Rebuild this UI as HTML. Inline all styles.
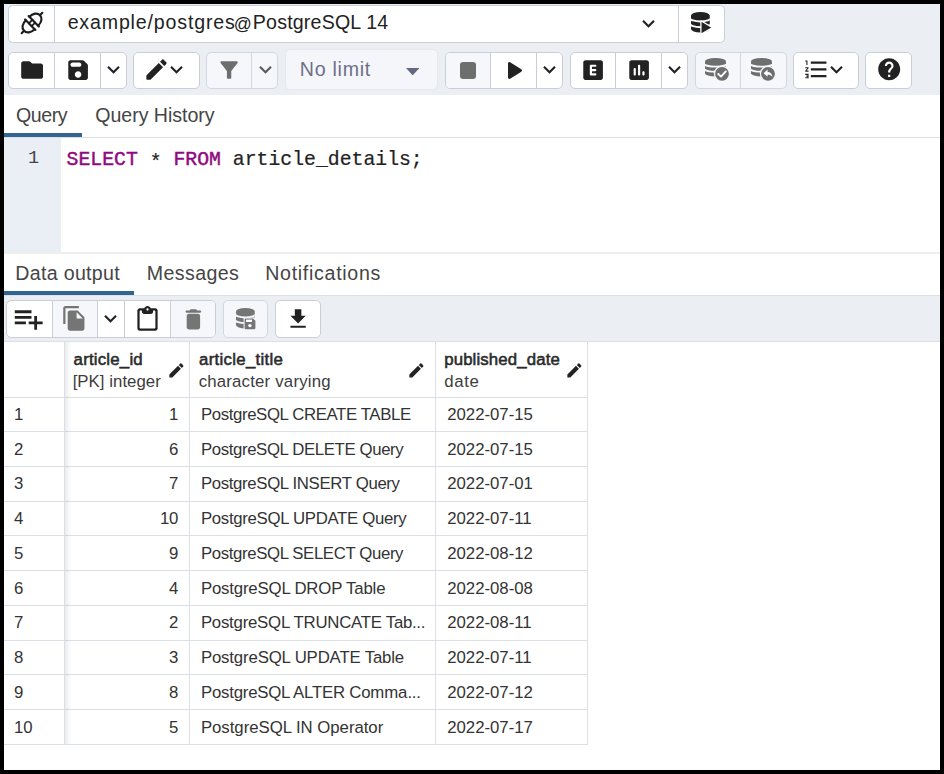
<!DOCTYPE html>
<html><head><meta charset="utf-8"><title>pgAdmin Query Tool</title>
<style>
html,body{margin:0;padding:0;background:#000;}
body{width:944px;height:774px;position:relative;overflow:hidden;font-family:"Liberation Sans",sans-serif;}
.a{position:absolute;}
.b{position:absolute;box-sizing:border-box;}
.t{position:absolute;white-space:pre;}
b{font-weight:700;}
.kw{color:#8f0a80;-webkit-text-stroke:0.45px #8f0a80;}
</style></head><body>
<div class="a" style="left:4px;top:4px;width:936px;height:766px;background:#fff"></div>
<div class="a" style="left:4px;top:4px;width:936px;height:90.5px;background:#ebeef3"></div>
<div class="b" style="left:8px;top:4.5px;width:716.5px;height:38.0px;background:#fff;border:1px solid #c9ced9;border-radius:4.5px;"></div>
<div class="a" style="left:54.0px;top:4.5px;width:1px;height:38.0px;background:#c9ced9;"></div>
<div class="a" style="left:677.5px;top:4.5px;width:1px;height:38.0px;background:#c9ced9;"></div>
<svg class="a" style="left:15.600000000000001px;top:7.300000000000001px" width="32" height="32" viewBox="-4 -4 32 32"><g transform="translate(12 12) rotate(-44.5)" fill="none" stroke="#1c1c1c" stroke-width="2.15" stroke-linecap="round">
<path d="M-14.5 0H-11.2"/><path d="M14.5 0H11.2"/>
<path d="M-2.45 -6.3 C-7.4 -6.3 -11.2 -3.8 -11.2 0 C-11.2 3.8 -7.4 6.3 -2.45 6.3"/><path d="M2.45 -6.3 C7.4 -6.3 11.2 -3.8 11.2 0 C11.2 3.8 7.4 6.3 2.45 6.3"/>
<path d="M-2.45 -7.3V7.3"/><path d="M2.45 -7.3V7.3"/>
<path d="M-2.45 -2H2.45" stroke-width="1.8"/><path d="M-2.45 2H2.45" stroke-width="1.8"/>
</g></svg>
<div class="t" style="left:67.63px;top:10.11px;font-size:19.6px;line-height:25px;letter-spacing:0.835px;font-weight:400;color:#222222;font-family:'Liberation Sans',sans-serif;">example/postgres</div>
<div class="t" style="left:233.81px;top:12.93px;font-size:17.8px;line-height:23px;letter-spacing:0px;font-weight:400;color:#222222;font-family:'Liberation Sans',sans-serif;">@</div>
<div class="t" style="left:252.84px;top:10.11px;font-size:19.6px;line-height:25px;letter-spacing:0.183px;font-weight:400;color:#222222;font-family:'Liberation Sans',sans-serif;">PostgreSQL 14</div>
<svg class="a" style="left:636.10px;top:11.09px" width="25" height="25" viewBox="0 0 24 24" fill="#222222"><path d="M7.41 8.59L12 13.17l4.59-4.58L18 10l-6 6-6-6 1.41-1.41z"/></svg>
<svg class="a" style="left:691px;top:12.25px;overflow:visible" width="22" height="23" viewBox="0 0 22 23"><clipPath id="dbc1"><path d="M0 3.49 A9.375 3.49 0 0 1 18.75 3.49 V17.02 A9.375 3.49 0 0 1 0 17.02 Z"/></clipPath><path d="M0 3.49 A9.375 3.49 0 0 1 18.75 3.49 V17.02 A9.375 3.49 0 0 1 0 17.02 Z" fill="#222222"/><path clip-path="url(#dbc1)" d="M-1 5.98 A10.375 3.49 0 0 0 19.75 5.98" fill="none" stroke="#fff" stroke-width="1.95"/><path clip-path="url(#dbc1)" d="M-1 11.72 A10.375 3.49 0 0 0 19.75 11.72" fill="none" stroke="#fff" stroke-width="1.95"/><path d="M9.9 8.8 L21.6 15.6 L9.9 22.4 Z" fill="#222" stroke="#fff" stroke-width="1.3" stroke-linejoin="round"/></svg>
<div class="b" style="left:8.1px;top:51.5px;width:118.9px;height:37.900000000000006px;background:#fff;border:1px solid #c9ced9;border-radius:5px;"></div>
<div class="a" style="left:54.0px;top:51.5px;width:1px;height:37.900000000000006px;background:#c9ced9;"></div>
<div class="a" style="left:100.0px;top:51.5px;width:1px;height:37.900000000000006px;background:#c9ced9;"></div>
<svg class="a" style="left:18.50px;top:56.80px" width="26.2" height="26.2" viewBox="0 0 24 24" fill="#222222"><path d="M10.59 4.59C10.21 4.21 9.7 4 9.17 4H4c-1.1 0-1.99.9-1.99 2L2 18c0 1.1.9 2 2 2h16c1.1 0 2-.9 2-2V8c0-1.1-.9-2-2-2h-8l-1.410-1.410z"/></svg>
<svg class="a" style="left:64.50px;top:56.80px" width="26.2" height="26.2" viewBox="0 0 24 24" fill="#222222"><path d="M17.59 3.59c-.38-.38-.89-.59-1.42-.59H5c-1.11 0-2 .9-2 2v14c0 1.1.9 2 2 2h14c1.1 0 2-.9 2-2V7.83c0-.53-.21-1.04-.59-1.41l-2.820-2.830zM12 19c-1.660 0-3-1.340-3-3s1.340-3 3-3 3 1.340 3 3-1.340 3-3 3zm1-10H7c-1.100 0-2-.9-2-2s.9-2 2-2h6c1.100 0 2 .9 2 2s-.9 2-2 2z"/></svg>
<svg class="a" style="left:101.10px;top:57.09px" width="25" height="25" viewBox="0 0 24 24" fill="#222222"><path d="M7.41 8.59L12 13.17l4.59-4.58L18 10l-6 6-6-6 1.41-1.41z"/></svg>
<div class="b" style="left:133px;top:51.5px;width:66.5px;height:37.900000000000006px;background:#fff;border:1px solid #c9ced9;border-radius:5px;"></div>
<svg class="a" style="left:143.20px;top:56.40px" width="27" height="27" viewBox="0 0 24 24" fill="#222222"><path d="M3 17.46v3.04c0 .28.22.5.5.5h3.04c.13 0 .26-.05.35-.15L17.81 9.94l-3.75-3.75L3.15 17.1c-.1.1-.15.22-.15.36zM20.71 7.04c.39-.39.39-1.02 0-1.41l-2.34-2.34c-.39-.39-1.02-.39-1.41 0l-1.83 1.83 3.75 3.75 1.83-1.83z"/></svg>
<svg class="a" style="left:163.70px;top:57.39px" width="25" height="25" viewBox="0 0 24 24" fill="#222222"><path d="M7.41 8.59L12 13.17l4.59-4.58L18 10l-6 6-6-6 1.41-1.41z"/></svg>
<div class="b" style="left:206px;top:51.5px;width:72px;height:37.900000000000006px;background:#f6f7fa;border:1px solid #d3d7e0;border-radius:5px;"></div>
<div class="a" style="left:251.4px;top:51.5px;width:1px;height:37.900000000000006px;background:#d3d7e0;"></div>
<svg class="a" style="left:215.60px;top:56.80px" width="26.2" height="26.2" viewBox="0 0 24 24" fill="#6e6e6e"><path d="M4.25 5.61C6.27 8.2 10 13 10 13v6c0 .55.45 1 1 1h2c.55 0 1-.45 1-1v-6s3.72-4.8 5.74-7.39c.51-.66.04-1.61-.79-1.61H5.04c-.83 0-1.3.95-.79 1.61z"/></svg>
<svg class="a" style="left:252.60px;top:57.09px" width="25" height="25" viewBox="0 0 24 24" fill="#5a5a5a"><path d="M7.41 8.59L12 13.17l4.59-4.58L18 10l-6 6-6-6 1.41-1.41z"/></svg>
<div class="b" style="left:285px;top:49.3px;width:152.60000000000002px;height:41.2px;background:#f5f6fa;border:1px solid #e6e8ee;border-radius:5px;"></div>
<div class="t" style="left:299.74px;top:56.51px;font-size:19.6px;line-height:25px;letter-spacing:0.743px;font-weight:400;color:#6b7089;font-family:'Liberation Sans',sans-serif;">No limit</div>
<svg class="a" style="left:405.7px;top:67.6px" width="13.4" height="7.4" viewBox="0 0 10 5.5"><path d="M0 0H10L5 5.5Z" fill="#646980"/></svg>
<div class="b" style="left:444.5px;top:51.5px;width:118.0px;height:37.900000000000006px;background:#fff;border:1px solid #c9ced9;border-radius:5px;"></div>
<div class="a" style="left:490.0px;top:51.5px;width:1px;height:37.900000000000006px;background:#c9ced9;"></div>
<div class="a" style="left:536.0px;top:51.5px;width:1px;height:37.900000000000006px;background:#c9ced9;"></div>
<div class="a" style="left:445.5px;top:52.5px;width:44.5px;height:35.900000000000006px;background:#f6f7fa;border-radius:4px 0px 0px 4px;"></div>
<div class="a" style="left:459.5px;top:62.2px;width:16.7px;height:16.6px;border-radius:3px;background:#6e6e6e"></div>
<svg class="a" style="left:496.90px;top:54.00px" width="33" height="33" viewBox="0 0 24 24" fill="#222222"><path d="M8 6.82v10.36c0 .79.87 1.27 1.54.84l8.14-5.18c.62-.39.62-1.29 0-1.69L9.54 5.98C8.87 5.55 8 6.03 8 6.82z"/></svg>
<svg class="a" style="left:537.25px;top:57.09px" width="25" height="25" viewBox="0 0 24 24" fill="#222222"><path d="M7.41 8.59L12 13.17l4.59-4.58L18 10l-6 6-6-6 1.41-1.41z"/></svg>
<div class="b" style="left:569.5px;top:51.5px;width:118.5px;height:37.900000000000006px;background:#fff;border:1px solid #c9ced9;border-radius:5px;"></div>
<div class="a" style="left:615.0px;top:51.5px;width:1px;height:37.900000000000006px;background:#c9ced9;"></div>
<div class="a" style="left:660.8px;top:51.5px;width:1px;height:37.900000000000006px;background:#c9ced9;"></div>
<svg class="a" style="left:579.65px;top:56.80px" width="26.2" height="26.2" viewBox="0 0 24 24" fill="#222222"><path d="M19 3H5c-1.1 0-2 .9-2 2v14c0 1.1.9 2 2 2h14c1.1 0 2-.9 2-2V5c0-1.1-.9-2-2-2zm-5 6h-3v2h3c.55 0 1 .45 1 1s-.45 1-1 1h-3v2h3c.55 0 1 .45 1 1s-.45 1-1 1h-4c-.55 0-1-.45-1-1V8c0-.55.45-1 1-1h4c.55 0 1 .45 1 1s-.45 1-1 1z"/></svg>
<svg class="a" style="left:625.50px;top:56.80px" width="26.2" height="26.2" viewBox="0 0 24 24" fill="#222222"><path d="M19 3H5c-1.1 0-2 .9-2 2v14c0 1.1.9 2 2 2h14c1.1 0 2-.9 2-2V5c0-1.1-.9-2-2-2zM8 17c-.55 0-1-.45-1-1v-5c0-.55.45-1 1-1s1 .45 1 1v5c0 .55-.45 1-1 1zm4 0c-.55 0-1-.45-1-1V8c0-.55.45-1 1-1s1 .45 1 1v8c0 .55-.45 1-1 1zm4 0c-.55 0-1-.45-1-1v-2c0-.55.45-1 1-1s1 .45 1 1v2c0 .55-.45 1-1 1z"/></svg>
<svg class="a" style="left:662.40px;top:57.09px" width="25" height="25" viewBox="0 0 24 24" fill="#222222"><path d="M7.41 8.59L12 13.17l4.59-4.58L18 10l-6 6-6-6 1.41-1.41z"/></svg>
<div class="b" style="left:694.5px;top:51.5px;width:92.5px;height:37.900000000000006px;background:#f6f7fa;border:1px solid #d3d7e0;border-radius:5px;"></div>
<div class="a" style="left:740.2px;top:51.5px;width:1px;height:37.900000000000006px;background:#d3d7e0;"></div>
<svg class="a" style="left:705.25px;top:58.25px;overflow:visible" width="26" height="26" viewBox="0 0 26 26"><clipPath id="dbc2"><path d="M0 3.15 A10.5 3.15 0 0 1 21 3.15 V15.36 A10.5 3.15 0 0 1 0 15.36 Z"/></clipPath><path d="M0 3.15 A10.5 3.15 0 0 1 21 3.15 V15.36 A10.5 3.15 0 0 1 0 15.36 Z" fill="#6e6e6e"/><path clip-path="url(#dbc2)" d="M-1 5.39 A11.5 3.15 0 0 0 22 5.39" fill="none" stroke="#f6f7fa" stroke-width="1.76"/><path clip-path="url(#dbc2)" d="M-1 10.57 A11.5 3.15 0 0 0 22 10.57" fill="none" stroke="#f6f7fa" stroke-width="1.76"/><circle cx="17" cy="15.85" r="8.2" fill="#f6f7fa"/><circle cx="17" cy="15.85" r="6.9" fill="#6e6e6e"/><path d="M13.3 16 L16 18.6 L20.8 13.4" fill="none" stroke="#fff" stroke-width="1.9" stroke-linecap="round" stroke-linejoin="round"/></svg>
<svg class="a" style="left:751.1px;top:58.25px;overflow:visible" width="26" height="26" viewBox="0 0 26 26"><clipPath id="dbc3"><path d="M0 3.15 A10.5 3.15 0 0 1 21 3.15 V15.36 A10.5 3.15 0 0 1 0 15.36 Z"/></clipPath><path d="M0 3.15 A10.5 3.15 0 0 1 21 3.15 V15.36 A10.5 3.15 0 0 1 0 15.36 Z" fill="#6e6e6e"/><path clip-path="url(#dbc3)" d="M-1 5.39 A11.5 3.15 0 0 0 22 5.39" fill="none" stroke="#f6f7fa" stroke-width="1.76"/><path clip-path="url(#dbc3)" d="M-1 10.57 A11.5 3.15 0 0 0 22 10.57" fill="none" stroke="#f6f7fa" stroke-width="1.76"/><circle cx="17" cy="15.85" r="8.2" fill="#f6f7fa"/><circle cx="17" cy="15.85" r="6.9" fill="#6e6e6e"/><path d="M12.6 15.2 L16.6 11.6 V13.9 C19.6 13.9 21.2 15.9 21.4 19.2 C20.4 17.6 19 16.6 16.6 16.6 V18.8 Z" fill="#fff"/></svg>
<div class="b" style="left:793px;top:51.5px;width:65.70000000000005px;height:37.900000000000006px;background:#fff;border:1px solid #c9ced9;border-radius:5px;"></div>
<svg class="a" style="left:802.80px;top:56.10px" width="26.8" height="26.8" viewBox="0 0 24 24" fill="#222222"><path d="M2 17h2v.5H3v1h1v.5H2v1h3v-4H2v1zm1-9h1V4H2v1h1v3zm-1 3h1.8L2 13.1v.9h3v-1H3.2L5 10.9V10H2v1zm5-6v2h14V5H7zm0 14h14v-2H7v2zm0-6h14v-2H7v2z"/></svg>
<svg class="a" style="left:823.50px;top:57.09px" width="25" height="25" viewBox="0 0 24 24" fill="#222222"><path d="M7.41 8.59L12 13.17l4.59-4.58L18 10l-6 6-6-6 1.41-1.41z"/></svg>
<div class="b" style="left:865.2px;top:51.5px;width:46.799999999999955px;height:37.900000000000006px;background:#fff;border:1px solid #c9ced9;border-radius:5px;"></div>
<svg class="a" style="left:875.80px;top:56.45px" width="26.4" height="26.4" viewBox="0 0 24 24" fill="#222222"><path d="M12 2C6.48 2 2 6.48 2 12s4.480 10 10 10 10-4.480 10-10S17.520 2 12 2zm1 17h-2v-2h2v2zm2.070-7.750l-.9.920C13.450 12.900 13 13.500 13 15h-2v-.5c0-1.100.450-2.100 1.170-2.830l1.240-1.260c.37-.36.59-.86.59-1.410 0-1.100-.9-2-2-2s-2 .9-2 2H8c0-2.210 1.790-4 4-4s4 1.790 4 4c0 .880-.360 1.680-.930 2.250z"/></svg>
<div class="t" style="left:15.93px;top:102.51px;font-size:19.6px;line-height:25px;letter-spacing:-0.403px;font-weight:400;color:#454545;font-family:'Liberation Sans',sans-serif;">Query</div>
<div class="t" style="left:95.18px;top:102.51px;font-size:19.6px;line-height:25px;letter-spacing:-0.024px;font-weight:400;color:#454545;font-family:'Liberation Sans',sans-serif;">Query History</div>
<div class="a" style="left:4px;top:137px;width:936px;height:1px;background:#dcdfe5"></div>
<div class="a" style="left:4px;top:133px;width:78px;height:4.2px;background:#326690"></div>
<div class="a" style="left:4px;top:138px;width:56.7px;height:114px;background:#eaeef5"></div>
<div class="t" style="left:27.9px;top:147.44px;font-size:18.6px;line-height:24px;letter-spacing:0px;font-weight:400;color:#444;font-family:'Liberation Mono',monospace;">1</div>
<div class="t" style="left:66.6px;top:146.62px;font-size:19.8px;line-height:26px;letter-spacing:0px;font-weight:400;color:#222;font-family:'Liberation Mono',monospace;white-space:pre;-webkit-text-stroke:0.2px #222;"><span class="kw">SELECT</span> <span style="position:relative;top:3.4px">*</span> <span class="kw">FROM</span> article_details;</div>
<div class="a" style="left:4px;top:252.2px;width:936px;height:2.2px;background:#eeeeee"></div>
<div class="t" style="left:15.24px;top:260.71px;font-size:19.6px;line-height:25px;letter-spacing:0.319px;font-weight:400;color:#454545;font-family:'Liberation Sans',sans-serif;">Data output</div>
<div class="t" style="left:146.74px;top:260.71px;font-size:19.6px;line-height:25px;letter-spacing:0.397px;font-weight:400;color:#454545;font-family:'Liberation Sans',sans-serif;">Messages</div>
<div class="t" style="left:265.24px;top:260.71px;font-size:19.6px;line-height:25px;letter-spacing:0.696px;font-weight:400;color:#454545;font-family:'Liberation Sans',sans-serif;">Notifications</div>
<div class="a" style="left:4px;top:295.2px;width:936px;height:46.8px;background:#ebeef3;box-shadow:inset 0 -1px 0 #dcdfe5, inset 0 1px 0 #dcdfe5"></div>
<div class="a" style="left:4px;top:291.3px;width:130.2px;height:4.2px;background:#326690"></div>
<div class="b" style="left:6px;top:300.3px;width:209.5px;height:37.5px;background:#fff;border:1px solid #c9ced9;border-radius:5px;"></div>
<div class="a" style="left:51.5px;top:300.3px;width:1px;height:37.5px;background:#c9ced9;"></div>
<div class="a" style="left:96.8px;top:300.3px;width:1px;height:37.5px;background:#c9ced9;"></div>
<div class="a" style="left:123.5px;top:300.3px;width:1px;height:37.5px;background:#c9ced9;"></div>
<div class="a" style="left:169.5px;top:300.3px;width:1px;height:37.5px;background:#c9ced9;"></div>
<div class="a" style="left:52.5px;top:301.3px;width:44.3px;height:35.5px;background:#f6f7fa;border-radius:0px 0px 0px 0px;"></div>
<div class="a" style="left:170.5px;top:301.3px;width:44.0px;height:35.5px;background:#f6f7fa;border-radius:0px 4px 4px 0px;"></div>
<svg class="a" style="left:12.20px;top:302.30px" width="33.4" height="33.4" viewBox="0 0 24 24" fill="#222222"><path d="M14 10H2v2h12v-2zm0-4H2v2h12V6zm4 8v-4h-2v4h-4v2h4v4h2v-4h4v-2h-4zM2 16h8v-2H2v2z"/></svg>
<svg class="a" style="left:60.90px;top:305.35px" width="26.8" height="26.8" viewBox="0 0 24 24" fill="#757575"><path d="M16 1H4c-1.100 0-2 .9-2 2v14h2V3h12V1zm-1 4l6 6v10c0 1.100-.9 2-2 2H7.990C6.890 23 6 22.100 6 21l.010-14c0-1.100.890-2 1.990-2h7zm-1 7h5.500L14 6.500V12z"/></svg>
<svg class="a" style="left:98.35px;top:306.29px" width="25" height="25" viewBox="0 0 24 24" fill="#222222"><path d="M7.41 8.59L12 13.17l4.59-4.58L18 10l-6 6-6-6 1.41-1.41z"/></svg>
<svg class="a" style="left:133.50px;top:305.50px" width="27" height="27" viewBox="0 0 24 24" fill="#222222"><path d="M19 2h-4.180C14.400.840 13.300 0 12 0S9.600.840 9.180 2H5c-1.100 0-2 .9-2 2v16c0 1.100.9 2 2 2h14c1.100 0 2-.9 2-2V4c0-1.100-.9-2-2-2zm-7 0c.55 0 1 .45 1 1s-.45 1-1 1-1-.45-1-1 .45-1 1-1zm6 18H6c-.55 0-1-.45-1-1V5c0-.55.45-1 1-1h1v1c0 1.100.9 2 2 2h6c1.100 0 2-.9 2-2V4h1c.55 0 1 .45 1 1v14c0 .55-.45 1-1 1z"/></svg>
<svg class="a" style="left:179.60px;top:305.90px" width="26.8" height="26.8" viewBox="0 0 24 24" fill="#757575"><path d="M6 19c0 1.100.9 2 2 2h8c1.100 0 2-.9 2-2V9c0-1.100-.9-2-2-2H8c-1.100 0-2 .9-2 2v10zM18 4h-2.500l-.710-.710c-.180-.180-.440-.290-.700-.290H9.910c-.260 0-.520.110-.700.290L8.500 4H6c-.55 0-1 .45-1 1s.45 1 1 1h12c.55 0 1-.45 1-1s-.45-1-1-1z"/></svg>
<div class="b" style="left:222.7px;top:300.3px;width:45.60000000000002px;height:37.5px;background:#f6f7fa;border:1px solid #d3d7e0;border-radius:5px;"></div>
<svg class="a" style="left:235.75px;top:308px;overflow:visible" width="22" height="23" viewBox="0 0 22 23"><clipPath id="dbc4"><path d="M0 3.47 A9.375 3.47 0 0 1 18.75 3.47 V16.93 A9.375 3.47 0 0 1 0 16.93 Z"/></clipPath><path d="M0 3.47 A9.375 3.47 0 0 1 18.75 3.47 V16.93 A9.375 3.47 0 0 1 0 16.93 Z" fill="#757575"/><path clip-path="url(#dbc4)" d="M-1 5.95 A10.375 3.47 0 0 0 19.75 5.95" fill="none" stroke="#f6f7fa" stroke-width="1.94"/><path clip-path="url(#dbc4)" d="M-1 11.66 A10.375 3.47 0 0 0 19.75 11.66" fill="none" stroke="#f6f7fa" stroke-width="1.94"/><rect x="7.6" y="9.5" width="12.6" height="12.6" fill="#f6f7fa"/><path d="M8.6 11.6 a1.2 1.2 0 0 1 1.2-1.2 h7.2 l2.4 2.4 v7.3 a1.2 1.2 0 0 1 -1.2 1.2 h-8.400 a1.2 1.2 0 0 1 -1.2-1.2 z" fill="#757575"/><rect x="10" y="11.600" width="6" height="2.4" fill="#fff"/><circle cx="13.9" cy="17.6" r="1.7" fill="#fff"/></svg>
<div class="b" style="left:275.3px;top:300.3px;width:46.19999999999999px;height:37.5px;background:#fff;border:1px solid #c9ced9;border-radius:5px;"></div>
<svg class="a" style="left:285.30px;top:305.60px" width="26.2" height="26.2" viewBox="0 0 24 24" fill="#222222"><path d="M19 9h-4V3H9v6H5l7 7 7-7zM5 18v2h14v-2H5z"/></svg>
<div class="a" style="left:64.0px;top:342px;width:1px;height:402.25px;background:#dcdfe5"></div>
<div class="a" style="left:189.0px;top:342px;width:1px;height:402.25px;background:#dcdfe5"></div>
<div class="a" style="left:434.8px;top:342px;width:1px;height:402.25px;background:#dcdfe5"></div>
<div class="a" style="left:587.0px;top:342px;width:1px;height:402.25px;background:#dcdfe5"></div>
<div class="a" style="left:4px;top:396.50px;width:583.5px;height:1px;background:#dcdfe5"></div>
<div class="a" style="left:4px;top:431.23px;width:583.5px;height:1px;background:#dcdfe5"></div>
<div class="a" style="left:4px;top:465.95px;width:583.5px;height:1px;background:#dcdfe5"></div>
<div class="a" style="left:4px;top:500.68px;width:583.5px;height:1px;background:#dcdfe5"></div>
<div class="a" style="left:4px;top:535.40px;width:583.5px;height:1px;background:#dcdfe5"></div>
<div class="a" style="left:4px;top:570.12px;width:583.5px;height:1px;background:#dcdfe5"></div>
<div class="a" style="left:4px;top:604.85px;width:583.5px;height:1px;background:#dcdfe5"></div>
<div class="a" style="left:4px;top:639.58px;width:583.5px;height:1px;background:#dcdfe5"></div>
<div class="a" style="left:4px;top:674.30px;width:583.5px;height:1px;background:#dcdfe5"></div>
<div class="a" style="left:4px;top:709.03px;width:583.5px;height:1px;background:#dcdfe5"></div>
<div class="a" style="left:4px;top:743.75px;width:583.5px;height:1px;background:#dcdfe5"></div>
<div class="a" style="left:65px;top:342px;width:6px;height:402.25px;background:linear-gradient(to right, rgba(60,70,90,0.10), rgba(60,70,90,0))"></div>
<div class="t" style="left:73.59px;top:348.68px;font-size:16.8px;line-height:22px;letter-spacing:0.216px;font-weight:400;color:#2a2a2a;font-family:'Liberation Sans',sans-serif;-webkit-text-stroke:0.55px #2a2a2a;">article_id</div>
<div class="t" style="left:72.66px;top:371.28px;font-size:16.8px;line-height:22px;letter-spacing:0.044px;font-weight:400;color:#3c3c3c;font-family:'Liberation Sans',sans-serif;">[PK] integer</div>
<div class="t" style="left:199.09px;top:348.68px;font-size:16.8px;line-height:22px;letter-spacing:0.295px;font-weight:400;color:#2a2a2a;font-family:'Liberation Sans',sans-serif;-webkit-text-stroke:0.55px #2a2a2a;">article_title</div>
<div class="t" style="left:198.64px;top:371.28px;font-size:16.8px;line-height:22px;letter-spacing:0.202px;font-weight:400;color:#3c3c3c;font-family:'Liberation Sans',sans-serif;">character varying</div>
<div class="t" style="left:444.22px;top:348.68px;font-size:16.8px;line-height:22px;letter-spacing:0.134px;font-weight:400;color:#2a2a2a;font-family:'Liberation Sans',sans-serif;-webkit-text-stroke:0.55px #2a2a2a;">published_date</div>
<div class="t" style="left:444.14px;top:371.28px;font-size:16.8px;line-height:22px;letter-spacing:0.684px;font-weight:400;color:#3c3c3c;font-family:'Liberation Sans',sans-serif;">date</div>
<svg class="a" style="left:166.60px;top:360.90px" width="18.8" height="18.8" viewBox="0 0 24 24" fill="#222222"><path d="M3 17.25V21h3.75L17.81 9.94l-3.75-3.75L3 17.25zM20.71 7.040c.39-.39.39-1.020 0-1.410l-2.340-2.340c-.39-.39-1.020-.39-1.410 0l-1.830 1.830 3.750 3.750 1.830-1.830z"/></svg>
<svg class="a" style="left:406.60px;top:360.90px" width="18.8" height="18.8" viewBox="0 0 24 24" fill="#222222"><path d="M3 17.25V21h3.75L17.81 9.94l-3.75-3.75L3 17.25zM20.71 7.040c.39-.39.39-1.020 0-1.410l-2.340-2.340c-.39-.39-1.020-.39-1.410 0l-1.830 1.830 3.750 3.750 1.830-1.830z"/></svg>
<svg class="a" style="left:564.80px;top:360.90px" width="18.8" height="18.8" viewBox="0 0 24 24" fill="#222222"><path d="M3 17.25V21h3.75L17.81 9.94l-3.75-3.75L3 17.25zM20.71 7.040c.39-.39.39-1.020 0-1.410l-2.340-2.340c-.39-.39-1.020-.39-1.410 0l-1.830 1.830 3.750 3.750 1.830-1.830z"/></svg>
<div class="t" style="left:14px;top:403.98px;font-size:16.8px;line-height:22px;letter-spacing:-0.2px;font-weight:400;color:#333;font-family:'Liberation Sans',sans-serif;">1</div>
<div class="t" style="right:765.8px;top:403.98px;font-size:16.8px;line-height:22px;letter-spacing:-0.2px;font-weight:400;color:#333;font-family:'Liberation Sans',sans-serif;">1</div>
<div class="t" style="left:200.92px;top:403.98px;font-size:16.8px;line-height:22px;letter-spacing:-0.378px;font-weight:400;color:#333;font-family:'Liberation Sans',sans-serif;">PostgreSQL CREATE TABLE</div>
<div class="t" style="left:447.2px;top:403.98px;font-size:16.8px;line-height:22px;letter-spacing:-0.02px;font-weight:400;color:#333;font-family:'Liberation Sans',sans-serif;">2022-07-15</div>
<div class="t" style="left:14px;top:438.70px;font-size:16.8px;line-height:22px;letter-spacing:-0.2px;font-weight:400;color:#333;font-family:'Liberation Sans',sans-serif;">2</div>
<div class="t" style="right:765.8px;top:438.70px;font-size:16.8px;line-height:22px;letter-spacing:-0.2px;font-weight:400;color:#333;font-family:'Liberation Sans',sans-serif;">6</div>
<div class="t" style="left:200.92px;top:438.70px;font-size:16.8px;line-height:22px;letter-spacing:-0.376px;font-weight:400;color:#333;font-family:'Liberation Sans',sans-serif;">PostgreSQL DELETE Query</div>
<div class="t" style="left:447.2px;top:438.70px;font-size:16.8px;line-height:22px;letter-spacing:-0.02px;font-weight:400;color:#333;font-family:'Liberation Sans',sans-serif;">2022-07-15</div>
<div class="t" style="left:14px;top:473.43px;font-size:16.8px;line-height:22px;letter-spacing:-0.2px;font-weight:400;color:#333;font-family:'Liberation Sans',sans-serif;">3</div>
<div class="t" style="right:765.8px;top:473.43px;font-size:16.8px;line-height:22px;letter-spacing:-0.2px;font-weight:400;color:#333;font-family:'Liberation Sans',sans-serif;">7</div>
<div class="t" style="left:200.92px;top:473.43px;font-size:16.8px;line-height:22px;letter-spacing:-0.348px;font-weight:400;color:#333;font-family:'Liberation Sans',sans-serif;">PostgreSQL INSERT Query</div>
<div class="t" style="left:447.2px;top:473.43px;font-size:16.8px;line-height:22px;letter-spacing:-0.02px;font-weight:400;color:#333;font-family:'Liberation Sans',sans-serif;">2022-07-01</div>
<div class="t" style="left:14px;top:508.15px;font-size:16.8px;line-height:22px;letter-spacing:-0.2px;font-weight:400;color:#333;font-family:'Liberation Sans',sans-serif;">4</div>
<div class="t" style="right:765.8px;top:508.15px;font-size:16.8px;line-height:22px;letter-spacing:-0.2px;font-weight:400;color:#333;font-family:'Liberation Sans',sans-serif;">10</div>
<div class="t" style="left:200.92px;top:508.15px;font-size:16.8px;line-height:22px;letter-spacing:-0.31px;font-weight:400;color:#333;font-family:'Liberation Sans',sans-serif;">PostgreSQL UPDATE Query</div>
<div class="t" style="left:447.2px;top:508.15px;font-size:16.8px;line-height:22px;letter-spacing:-0.02px;font-weight:400;color:#333;font-family:'Liberation Sans',sans-serif;">2022-07-11</div>
<div class="t" style="left:14px;top:542.88px;font-size:16.8px;line-height:22px;letter-spacing:-0.2px;font-weight:400;color:#333;font-family:'Liberation Sans',sans-serif;">5</div>
<div class="t" style="right:765.8px;top:542.88px;font-size:16.8px;line-height:22px;letter-spacing:-0.2px;font-weight:400;color:#333;font-family:'Liberation Sans',sans-serif;">9</div>
<div class="t" style="left:200.92px;top:542.88px;font-size:16.8px;line-height:22px;letter-spacing:-0.373px;font-weight:400;color:#333;font-family:'Liberation Sans',sans-serif;">PostgreSQL SELECT Query</div>
<div class="t" style="left:447.2px;top:542.88px;font-size:16.8px;line-height:22px;letter-spacing:-0.02px;font-weight:400;color:#333;font-family:'Liberation Sans',sans-serif;">2022-08-12</div>
<div class="t" style="left:14px;top:577.60px;font-size:16.8px;line-height:22px;letter-spacing:-0.2px;font-weight:400;color:#333;font-family:'Liberation Sans',sans-serif;">6</div>
<div class="t" style="right:765.8px;top:577.60px;font-size:16.8px;line-height:22px;letter-spacing:-0.2px;font-weight:400;color:#333;font-family:'Liberation Sans',sans-serif;">4</div>
<div class="t" style="left:200.92px;top:577.60px;font-size:16.8px;line-height:22px;letter-spacing:-0.177px;font-weight:400;color:#333;font-family:'Liberation Sans',sans-serif;">PostgreSQL DROP Table</div>
<div class="t" style="left:447.2px;top:577.60px;font-size:16.8px;line-height:22px;letter-spacing:-0.02px;font-weight:400;color:#333;font-family:'Liberation Sans',sans-serif;">2022-08-08</div>
<div class="t" style="left:14px;top:612.33px;font-size:16.8px;line-height:22px;letter-spacing:-0.2px;font-weight:400;color:#333;font-family:'Liberation Sans',sans-serif;">7</div>
<div class="t" style="right:765.8px;top:612.33px;font-size:16.8px;line-height:22px;letter-spacing:-0.2px;font-weight:400;color:#333;font-family:'Liberation Sans',sans-serif;">2</div>
<div class="t" style="left:200.92px;top:612.33px;font-size:16.8px;line-height:22px;letter-spacing:-0.234px;font-weight:400;color:#333;font-family:'Liberation Sans',sans-serif;">PostgreSQL TRUNCATE Tab</div>
<div class="t" style="left:411.97px;top:612.33px;font-size:16.8px;line-height:22px;letter-spacing:-0.277px;font-weight:400;color:#333;font-family:'Liberation Sans',sans-serif;">...</div>
<div class="t" style="left:447.2px;top:612.33px;font-size:16.8px;line-height:22px;letter-spacing:-0.02px;font-weight:400;color:#333;font-family:'Liberation Sans',sans-serif;">2022-08-11</div>
<div class="t" style="left:14px;top:647.05px;font-size:16.8px;line-height:22px;letter-spacing:-0.2px;font-weight:400;color:#333;font-family:'Liberation Sans',sans-serif;">8</div>
<div class="t" style="right:765.8px;top:647.05px;font-size:16.8px;line-height:22px;letter-spacing:-0.2px;font-weight:400;color:#333;font-family:'Liberation Sans',sans-serif;">3</div>
<div class="t" style="left:200.92px;top:647.05px;font-size:16.8px;line-height:22px;letter-spacing:-0.157px;font-weight:400;color:#333;font-family:'Liberation Sans',sans-serif;">PostgreSQL UPDATE Table</div>
<div class="t" style="left:447.2px;top:647.05px;font-size:16.8px;line-height:22px;letter-spacing:-0.02px;font-weight:400;color:#333;font-family:'Liberation Sans',sans-serif;">2022-07-11</div>
<div class="t" style="left:14px;top:681.78px;font-size:16.8px;line-height:22px;letter-spacing:-0.2px;font-weight:400;color:#333;font-family:'Liberation Sans',sans-serif;">9</div>
<div class="t" style="right:765.8px;top:681.78px;font-size:16.8px;line-height:22px;letter-spacing:-0.2px;font-weight:400;color:#333;font-family:'Liberation Sans',sans-serif;">8</div>
<div class="t" style="left:200.92px;top:681.78px;font-size:16.8px;line-height:22px;letter-spacing:-0.212px;font-weight:400;color:#333;font-family:'Liberation Sans',sans-serif;">PostgreSQL ALTER Comma</div>
<div class="t" style="left:407.47px;top:681.78px;font-size:16.8px;line-height:22px;letter-spacing:-0.277px;font-weight:400;color:#333;font-family:'Liberation Sans',sans-serif;">...</div>
<div class="t" style="left:447.2px;top:681.78px;font-size:16.8px;line-height:22px;letter-spacing:-0.02px;font-weight:400;color:#333;font-family:'Liberation Sans',sans-serif;">2022-07-12</div>
<div class="t" style="left:14px;top:716.50px;font-size:16.8px;line-height:22px;letter-spacing:-0.2px;font-weight:400;color:#333;font-family:'Liberation Sans',sans-serif;">10</div>
<div class="t" style="right:765.8px;top:716.50px;font-size:16.8px;line-height:22px;letter-spacing:-0.2px;font-weight:400;color:#333;font-family:'Liberation Sans',sans-serif;">5</div>
<div class="t" style="left:200.92px;top:716.50px;font-size:16.8px;line-height:22px;letter-spacing:-0.037px;font-weight:400;color:#333;font-family:'Liberation Sans',sans-serif;">PostgreSQL IN Operator</div>
<div class="t" style="left:447.2px;top:716.50px;font-size:16.8px;line-height:22px;letter-spacing:-0.02px;font-weight:400;color:#333;font-family:'Liberation Sans',sans-serif;">2022-07-17</div>
</body></html>
